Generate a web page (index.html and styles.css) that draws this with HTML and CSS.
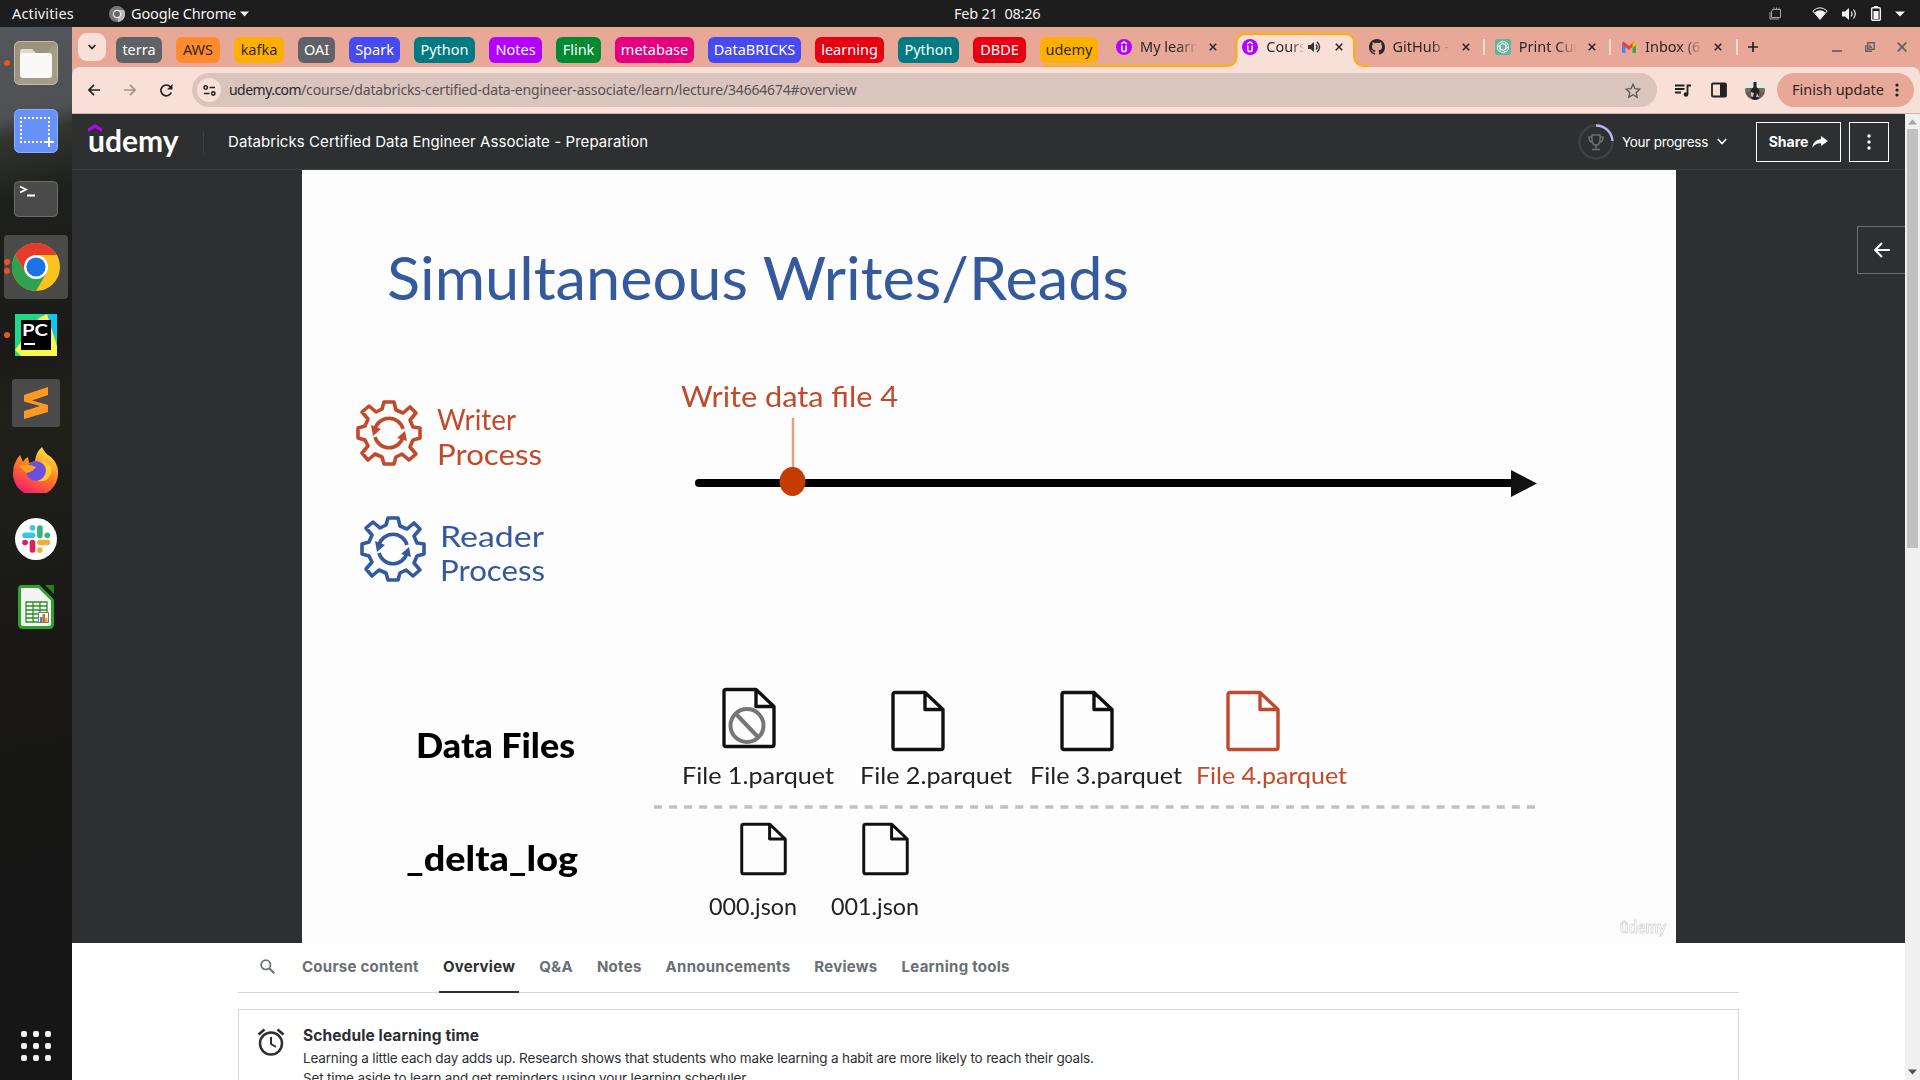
FILE: index.html
```html
<!DOCTYPE html>
<html lang="en">
<head>
<meta charset="utf-8">
<title>Course: Databricks Certified Data Engineer Associate - Preparation | Udemy</title>
<link rel="stylesheet" href="styles.css">
</head>
<body>
<svg class="defs" width="0" height="0" aria-hidden="true">
  <defs>
    <symbol id="x" viewBox="0 0 8 8"><path d="M.8.8l6.4 6.4M7.2.8L.8 7.2" stroke="currentColor" stroke-width="1.6" fill="none"/></symbol>
    <symbol id="udemy-fav" viewBox="0 0 16 16"><circle cx="8" cy="8" r="8" fill="#b400ff"/><path d="M5 5l3-2 3 2M5.800 6.500v4.200q0 1.800 2.200 1.800t2.200-1.800V6.500" fill="none" stroke="#fff" stroke-width="1.500"/></symbol>
    <symbol id="doc" viewBox="0 0 54 61"><path d="M4 2H34L52 19V57Q52 59 50 59H4Q2 59 2 57V4Q2 2 4 2ZM34 2V19H52" fill="none" stroke="currentColor" stroke-width="3.400" stroke-linejoin="round"/></symbol>
    <symbol id="gear" viewBox="-35 -35 70 70">
      <g fill="none" stroke="currentColor" stroke-width="3.600" stroke-linejoin="round">
        <path d="M-5-31H5L7-23 14-20 21-26 27-20 21-13 24-6 31-5V5L24 7 21 14 27 21 20 27 13 21 7 24 5 31H-5L-7 24-14 21-21 27-27 20-21 13-24 7-31 5V-5L-24-7-21-14-27-21-20-27-13-21-7-24Z"/>
        <path d="M-14-4A14.500 14.500 0 0 1 14-4M14 4A14.500 14.500 0 0 1-14 4"/>
      </g>
      <path d="M-18-8L-8-4-16 3ZM18 8L8 5 16-2Z" fill="currentColor"/>
    </symbol>
  </defs>
</svg>
<div class="desktop">
  <header class="topbar">
    <span class="activities">Activities</span>
    <svg class="app-icon" width="16" height="16" viewBox="0 0 16 16"><circle cx="8" cy="8" r="8" fill="#777"/><path d="M8 4h7a8 8 0 0 1-6 12z" fill="#bbb"/><circle cx="8" cy="8" r="3.600" fill="#666" stroke="#eee" stroke-width="1.300"/></svg>
    <span class="app-name">Google Chrome</span>
    <svg width="9" height="6" viewBox="0 0 9 6"><path d="M0 .5h9L4.500 5.500z" fill="#f2f2f2"/></svg>
    <span class="clock">Feb 21&nbsp; 08:26</span>
    <div class="tray">
      <svg width="12" height="13" viewBox="0 0 12 13" fill="none" stroke="#aaa49c"><path d="M3.500 2.500h8v8h-9v-6zM1 5v7h9M5 2V.5M7.500 2V.5M10 2V.5"/></svg>
      <svg class="wifi" width="16" height="13" viewBox="0 0 16 13"><path d="M.8 4Q8-2.500 15.200 4L8 12.500z" fill="none" stroke="#f2f2f2"/><path d="M2.500 5.500Q8 1 13.500 5.500L8 12.500z" fill="#f2f2f2"/></svg>
      <svg width="15" height="12" viewBox="0 0 15 12"><path d="M0 3.500h3L7 0v12L3 8.500H0z" fill="#f2f2f2"/><path d="M9 3.500q2 2.500 0 5M11.500 1.500q3.500 4.500 0 9" fill="none" stroke="#f2f2f2" stroke-width="1.200"/></svg>
      <svg width="10" height="15" viewBox="0 0 10 15"><path d="M3 0h4v2H3z" fill="#f2f2f2"/><rect x=".7" y="1.700" width="8.600" height="12.600" rx="1" fill="none" stroke="#f2f2f2" stroke-width="1.400"/><path d="M2.500 5h5v8h-5z" fill="#f2f2f2"/></svg>
      <svg width="10" height="6" viewBox="0 0 10 6"><path d="M0 .5h10L5 5.500z" fill="#f2f2f2"/></svg>
    </div>
  </header>

  <div class="workspace">
    <nav class="dock">
      <div class="app one"><svg width="44" height="44" viewBox="0 0 44 44"><rect x=".5" y=".5" width="43" height="43" rx="5" fill="#9c937e" stroke="#c6bda9"/><path d="M1 43L43 1v37q0 5-5 5z" fill="#aaa18c" opacity=".6"/><path d="M6 10q0-2 2-2h10l4 4v6H6z" fill="#dedad0"/><rect x="6" y="12" width="32" height="25" rx="3" fill="#faf9f7"/></svg></div>
      <div class="app"><svg width="44" height="44" viewBox="0 0 44 44"><rect x=".5" y=".5" width="43" height="43" rx="5" fill="#6790f8" stroke="#8db0ff"/><path d="M6 9h30M6 33h26M7 8v26M35 8v20" stroke="#fff" stroke-width="2" stroke-dasharray="2 2" fill="none"/><path d="M35 28v10M30 33h10" stroke="#fff" stroke-width="2"/></svg></div>
      <div class="app"><svg width="44" height="36" viewBox="0 0 44 36"><rect x=".5" y=".5" width="43" height="35" rx="4" fill="#4b4b4b" stroke="#6b6b6b"/><path d="M6 5.500l6 3-6 3M13 14.500h8" fill="none" stroke="#fff" stroke-width="1.800"/></svg></div>
      <div class="app two active"><svg width="48" height="48" viewBox="-24 -24 48 48"><circle r="24" fill="#fcc31e"/><path d="M-20.800-12A24 24 0 0 1 20.800-12H0L-10.400 6Z" fill="#e33b2e"/><path d="M-20.800-12A24 24 0 0 0 0 24L10.400 6 0 12-10.400 6Z" fill="#30a14e"/><circle r="12" fill="#fff"/><circle r="9.600" fill="#1a73e8"/></svg></div>
      <div class="app one"><svg width="42" height="42" viewBox="0 0 42 42"><path d="M0 0h42v42H0z" fill="#21d789"/><path d="M25 0h17v24z" fill="#12c5ea"/><path d="M24 4l8-4 10 32v10H6l-6-6z" fill="#fcf84a"/><path d="M6 6h30v30H6z" fill="#000"/><text x="7" y="22" class="pc" textLength="26" lengthAdjust="spacingAndGlyphs">PC</text><path d="M9 30h11" stroke="#fff" stroke-width="2"/></svg></div>
      <div class="app"><svg width="48" height="48" viewBox="0 0 48 48"><rect width="48" height="48" rx="3" fill="#4a4a4a"/><path d="M12 16L36 8v8l-16 5.500L36 26v7L12 40v-8l16-5-16-4.500z" fill="#ff9820"/></svg></div>
      <div class="app firefox"><svg width="46" height="46" viewBox="0 0 46 46"><defs><linearGradient id="ff" x1=".8" y1="0" x2=".3" y2="1"><stop offset="0" stop-color="#fff044"/><stop offset=".5" stop-color="#ff7b22"/><stop offset="1" stop-color="#f4176e"/></linearGradient></defs><path d="M29 0q3 7 9 10 8 8 7 17A22.500 22.500 0 0 1 0 26Q0 16 7 8l3 7q2-4 5-5l1 6 6-2Q23 5 29 0z" fill="url(#ff)"/><circle cx="23" cy="24" r="10" fill="#6b4fe0"/><path d="M6 19q9-3 17 1-3 5-10 6Q9 21 6 19z" fill="#ffa01f"/><path d="M25 14q9 2 8 10-1 8-9 10 10 2 14-7 2-9-6-12z" fill="#ffcb2d"/></svg></div>
      <div class="app"><svg width="42" height="42" viewBox="0 0 42 42"><circle cx="21" cy="21" r="21" fill="#fff"/><g stroke-width="5.600" stroke-linecap="round"><path d="M10 17.200h7.500" stroke="#36c5f0"/><path d="M17.500 9.900v.1" stroke="#36c5f0"/><path d="M24.900 10v7.500" stroke="#2eb67d"/><path d="M32.200 17.200h.1" stroke="#2eb67d"/><path d="M24.900 24.500h7.500" stroke="#ecb22e"/><path d="M24.900 32v.1" stroke="#ecb22e"/><path d="M17.500 24.500v7.500" stroke="#e01e5a"/><path d="M10 24.500h.1" stroke="#e01e5a"/></g></svg></div>
      <div class="app"><svg width="36" height="44" viewBox="0 0 36 44"><path d="M4 1.500h17L34.500 15v24q0 3.500-3.500 3.500H5q-3.500 0-3.500-3.500V4q0-2.500 2.500-2.500z" fill="#f4f4f2" stroke="#2fa32a" stroke-width="3"/><path d="M27 0h9v9z" fill="#28801c"/><path d="M8 17h21v20H8zM8 21h21M8 25h21M8 29h21M8 33h21M15 17v20M22 17v20" fill="#fff" stroke="#2a8f20" stroke-width="1.300"/><path d="M20.500 27.500h10v10h-10z" fill="#fff" stroke="#777"/><path d="M22 32h2.500v5H22z" fill="#2a8bd8"/><path d="M24.500 29H27v8h-2.500z" fill="#e0662a"/><path d="M27 33h2.500v4H27z" fill="#e8a923"/></svg></div>
      <svg class="all-apps" width="30" height="30" viewBox="0 0 30 30" fill="#f2f2f2"><rect width="6" height="6" rx="2"/><rect x="12" width="6" height="6" rx="2"/><rect x="24" width="6" height="6" rx="2"/><rect y="12" width="6" height="6" rx="2"/><rect x="12" y="12" width="6" height="6" rx="2"/><rect x="24" y="12" width="6" height="6" rx="2"/><rect y="24" width="6" height="6" rx="2"/><rect x="12" y="24" width="6" height="6" rx="2"/><rect x="24" y="24" width="6" height="6" rx="2"/></svg>
    </nav>

    <main class="browser">
      <div class="tabstrip">
        <svg class="tab-outline" width="328" height="40" viewBox="0 0 328 40"><path d="M0 39H185Q194 39 194.500 30V16Q195 7 204 7H303Q312 7 312 16V30Q313 39 322 39H327V40H0Z" fill="#f8e0d8"/><path d="M0 39H185Q194 39 194.500 30V16Q195 7 204 7H303Q312 7 312 16V30Q313 39 322 39H327" fill="none" stroke="#ffb000" stroke-width="2"/></svg>
        <button class="tab-search"><svg width="8" height="6" viewBox="0 0 8 6"><path d="M.7 1l3.300 3.500L7.300 1" fill="none" stroke="#222" stroke-width="1.800"/></svg></button>
        <div class="groups">
          <span class="chip grey w46">terra</span>
          <span class="chip orange w44">AWS</span>
          <span class="chip yellow w50">kafka</span>
          <span class="chip grey w37">OAI</span>
          <span class="chip blue w51">Spark</span>
          <span class="chip teal w61">Python</span>
          <span class="chip purple w53">Notes</span>
          <span class="chip green w45">Flink</span>
          <span class="chip pink w79">metabase</span>
          <span class="chip blue w93">DataBRICKS</span>
          <span class="chip red w69">learning</span>
          <span class="chip teal w61">Python</span>
          <span class="chip red w53">DBDE</span>
          <span class="chip yellow w58">udemy</span>
        </div>
        <div class="tabs">
          <div class="tab"><svg width="16" height="16"><use href="#udemy-fav"/></svg><span class="label">My learn</span><svg width="8" height="8"><use href="#x"/></svg></div>
          <div class="tab current"><svg width="16" height="16"><use href="#udemy-fav"/></svg><span class="label short">Cours</span><svg width="13" height="12" viewBox="0 0 13 12"><path d="M0 4h2.500L6 1v10L2.500 8H0z" fill="#333"/><path d="M8 3.500q2 2.500 0 5M9 .7q5 5.300 0 10.600" fill="none" stroke="#333" stroke-width="1.400"/></svg><svg width="8" height="8"><use href="#x"/></svg></div>
          <div class="tab sep"><svg width="16" height="16" viewBox="0 0 16 16"><path d="M8 0C3.580 0 0 3.580 0 8c0 3.540 2.290 6.530 5.470 7.590.4.070.55-.17.55-.38v-1.490c-2.010.37-2.530-.49-2.690-.94-.09-.23-.48-.94-.82-1.130-.28-.15-.68-.52-.01-.53.63-.01 1.080.58 1.230.82.720 1.210 1.870.87 2.330.66.070-.52.280-.87.510-1.070-1.780-.2-3.640-.89-3.640-3.950 0-.87.310-1.590.82-2.150-.08-.2-.36-1.020.08-2.120 0 0 .67-.21 2.200.82A7.600 7.600 0 0 1 8 3.860c.68 0 1.360.09 2 .27 1.530-1.040 2.200-.82 2.200-.82.440 1.100.160 1.920.080 2.120.51.560.82 1.270.82 2.150 0 3.070-1.870 3.750-3.650 3.950.29.250.54.730.54 1.480v2.200c0 .21.150.46.550.38A8 8 0 0 0 16 8c0-4.420-3.580-8-8-8z" fill="#24292f"/></svg><span class="label">GitHub -</span><svg width="8" height="8"><use href="#x"/></svg></div>
          <div class="tab sep"><svg width="16" height="16" viewBox="0 0 16 16"><rect width="16" height="16" rx="2" fill="#66b3a0"/><g fill="none" stroke="#fff" stroke-width=".7" transform="translate(8 8)"><path id="petal" d="M-3-4.500Q-1-6.500 1.500-5.500 3.500-4.500 3-2V1.800L0 3.500"/><use href="#petal" transform="rotate(60)"/><use href="#petal" transform="rotate(120)"/><use href="#petal" transform="rotate(180)"/><use href="#petal" transform="rotate(240)"/><use href="#petal" transform="rotate(300)"/></g></svg><span class="label">Print Cur</span><svg width="8" height="8"><use href="#x"/></svg></div>
          <div class="tab sep"><svg width="16" height="16" viewBox="0 0 16 16"><path d="M1 4h3.500v10H2q-1 0-1-1z" fill="#4285f4"/><path d="M11.500 4H15v9q0 1-1 1h-2.500z" fill="#34a853"/><path d="M1 4l1.500-1.500L8 7l5-4.500 2 2-7 6.500-7-6z" fill="#ea4335"/><path d="M11.500 4.500L14 2.500q1 .5 1 1.500v2l-3.500 3z" fill="#fbbc04"/></svg><span class="label">Inbox (6</span><svg width="8" height="8"><use href="#x"/></svg></div>
        </div>
        <svg class="plus" width="10" height="10" viewBox="0 0 10 10"><path d="M5 0v10M0 5h10" stroke="#222" stroke-width="1.700"/></svg>
        <div class="window-buttons">
          <svg width="10" height="10" viewBox="0 0 10 10"><path d="M0 9h10" stroke="#6c5f60" stroke-width="1.800"/></svg>
          <svg width="10" height="10" viewBox="0 0 10 10"><path d="M2.800.8h6.400v6.400H2.800zM5 2.800v2.400h2M.8 3v6.200H7" fill="none" stroke="#6c5f60" stroke-width="1.500"/></svg>
          <svg width="10" height="10" viewBox="0 0 10 10"><path d="M.7.7l8.600 8.600M9.300.7L.7 9.300" stroke="#6c5f60" stroke-width="1.800"/></svg>
        </div>
      </div>

      <div class="toolbar">
        <div class="nav">
          <svg width="12" height="12" viewBox="0 0 12 12"><path d="M12 6H1M6 .8L.9 6 6 11.200" fill="none" stroke="#222" stroke-width="1.700"/></svg>
          <svg width="12" height="12" viewBox="0 0 12 12"><path d="M0 6h11M6 .8L11.100 6 6 11.200" fill="none" stroke="#a3918c" stroke-width="1.700"/></svg>
          <svg width="13" height="13" viewBox="0 0 13 13"><path d="M11.300 8.500A5.400 5.400 0 1 1 10.500 3" fill="none" stroke="#222" stroke-width="1.700"/><path d="M12.500 0v5.500H7z" fill="#222"/></svg>
        </div>
        <div class="omnibox">
          <span class="site"><svg width="13" height="11" viewBox="0 0 13 11" fill="none" stroke="#222" stroke-width="1.500"><circle cx="2.700" cy="2.500" r="1.700"/><path d="M6.500 2.500H12M1 8.500h5.500"/><circle cx="10.300" cy="8.500" r="1.700"/></svg></span>
          <span class="url"><span class="host">udemy.com</span><span class="path">/course/databricks-certified-data-engineer-associate/learn/lecture/34664674#overview</span></span>
          <svg class="star" width="16" height="15" viewBox="0 0 16 15"><path d="M8 1.200l2 4.500 4.900.5-3.700 3.300 1.100 4.800L8 11.800l-4.300 2.500 1.100-4.800L1.100 6.200 6 5.700z" fill="none" stroke="#5c5355" stroke-width="1.300"/></svg>
        </div>
        <svg class="media" width="16" height="13" viewBox="0 0 16 13"><path d="M0 1.500h9.500M0 5h9.500M0 8.500h6M12.500 10V1.500H16" fill="none" stroke="#222" stroke-width="1.800"/><circle cx="11" cy="10.500" r="2.300" fill="#222"/></svg>
        <svg class="side" width="16" height="16" viewBox="0 0 16 16"><rect x="1" y="1.500" width="14" height="13" rx="1" fill="none" stroke="#222" stroke-width="1.800"/><path d="M9 1h6v14H9z" fill="#222"/></svg>
        <svg class="avatar" width="20" height="20" viewBox="0 0 20 20"><defs><clipPath id="av"><circle cx="10" cy="10" r="10"/></clipPath></defs><g clip-path="url(#av)"><path d="M0 0h20v20H0z" fill="#e9e7e6"/><path d="M0 8h20v4H0z" fill="#65775a"/><path d="M0 12h20v8H0z" fill="#6e5a50"/><path d="M8.500 2h3v5l3 3-1 10H7L5.500 10l3-3z" fill="#252126"/><path d="M6 12l3 1-1 4-2-1zM12 13l2 4h-3z" fill="#c9c4c0"/></g></svg>
        <div class="update"><span class="update-text">Finish update</span><svg width="4" height="14" viewBox="0 0 4 14" fill="#222"><circle cx="2" cy="2" r="1.600"/><circle cx="2" cy="7" r="1.600"/><circle cx="2" cy="12" r="1.600"/></svg></div>
      </div>

      <div class="viewport">
        <div class="page">
          <header class="course-header">
            <div class="logo"><svg class="hat" width="14" height="8" viewBox="0 0 14 8"><path d="M0 4.500L7 0l7 4.500V8L7 4 0 8z" fill="#b400ff"/></svg>udemy</div>
            <h1>Databricks Certified Data Engineer Associate - Preparation</h1>
            <svg class="ring" width="36" height="36" viewBox="-18 -18 36 36" fill="none"><circle r="16.500" stroke="#3e4143" stroke-width="2.400"/><path d="M0-16.500A16.500 16.500 0 0 1 16.500-1" stroke="#c0b0f8" stroke-width="2.400"/><path d="M-4-7H4V-2Q4 3 0 3T-4-2ZM-4-5H-7Q-7 0-3.500 0M4-5H7Q7 0 3.500 0M0 3V7M-4 7.500H4" stroke="#6a6f73" stroke-width="1.500"/></svg>
            <span class="progress">Your progress</span>
            <svg class="chev" width="10" height="7" viewBox="0 0 10 7"><path d="M.8 1L5 5.500 9.200 1" fill="none" stroke="#fff" stroke-width="1.700"/></svg>
            <button class="share">Share<svg width="16" height="12" viewBox="0 0 16 12"><path d="M9 0l7 5-7 5V7.200Q3 7 0 12 1 4 9 3z" fill="#fff"/></svg></button>
            <button class="more"><svg width="4" height="16" viewBox="0 0 4 16" fill="#fff"><circle cx="2" cy="2" r="1.700"/><circle cx="2" cy="8" r="1.700"/><circle cx="2" cy="14" r="1.700"/></svg></button>
          </header>
          <section class="stage">
            <svg class="slide" width="1374" height="773" viewBox="302 170 1374 773">
              <rect x="302" y="170" width="1374" height="773" fill="#fdfdfd"/>
              <g class="ink">
                <text x="387" y="300" class="blue" font-size="60" textLength="742" lengthAdjust="spacingAndGlyphs">Simultaneous Writes/Reads</text>
                <g class="rust">
                  <text x="681" y="407" font-size="29" textLength="217" lengthAdjust="spacingAndGlyphs">Write data file 4</text>
                  <use href="#gear" x="354" y="398" width="70" height="70"/>
                  <text x="437" y="430" font-size="29" textLength="79" lengthAdjust="spacingAndGlyphs">Writer</text>
                  <text x="437" y="465" font-size="29" textLength="105" lengthAdjust="spacingAndGlyphs">Process</text>
                </g>
                <g class="blue">
                  <use href="#gear" x="358" y="514" width="70" height="70"/>
                  <text x="440" y="547" font-size="29" textLength="104" lengthAdjust="spacingAndGlyphs">Reader</text>
                  <text x="440" y="581" font-size="29" textLength="105" lengthAdjust="spacingAndGlyphs">Process</text>
                </g>
                <path d="M793 418V470" stroke="#e2a07f" stroke-width="2.500"/>
                <path d="M699 483H1514" stroke="#000" stroke-width="8" stroke-linecap="round"/>
                <path d="M1511 470L1537 483.500 1511 497Z"/>
                <ellipse cx="792.500" cy="481.500" rx="13" ry="14.500" fill="#c43c00"/>
                <text x="416" y="758" class="heavy" font-size="34" textLength="159" lengthAdjust="spacingAndGlyphs">Data Files</text>
                <text x="406" y="871" class="heavy" font-size="34" textLength="172" lengthAdjust="spacingAndGlyphs">_delta_log</text>
                <use href="#doc" x="722" y="687" width="54" height="62"/>
                <g fill="none" stroke="#77757a" stroke-width="4"><circle cx="747" cy="725.500" r="16.500"/><path d="M736 714L759 738"/></g>
                <use href="#doc" x="891" y="690" width="54" height="62"/>
                <use href="#doc" x="1060" y="690" width="54" height="62"/>
                <use href="#doc" class="rust" x="1226" y="690" width="54" height="62"/>
                <g font-size="23" class="soft">
                  <text x="682" y="784" textLength="152" lengthAdjust="spacingAndGlyphs">File 1.parquet</text>
                  <text x="860" y="784" textLength="152" lengthAdjust="spacingAndGlyphs">File 2.parquet</text>
                  <text x="1030" y="784" textLength="152" lengthAdjust="spacingAndGlyphs">File 3.parquet</text>
                  <text x="1196" y="784" textLength="151" lengthAdjust="spacingAndGlyphs" class="rust">File 4.parquet</text>
                  <text x="709" y="915" textLength="88" lengthAdjust="spacingAndGlyphs">000.json</text>
                  <text x="831" y="915" textLength="88" lengthAdjust="spacingAndGlyphs">001.json</text>
                </g>
                <path d="M654 807H1535" stroke="#c3bfc3" stroke-width="3.500" stroke-dasharray="8 7.050"/>
                <use href="#doc" x="740" y="822" width="47" height="54"/>
                <use href="#doc" x="862" y="822" width="47" height="54"/>
                <text x="1620" y="933" class="mark" font-size="17" textLength="46" lengthAdjust="spacingAndGlyphs">ûdemy</text>
              </g>
            </svg>
            <button class="drawer"><svg width="16" height="16" viewBox="0 0 16 16"><path d="M16 8H1.500M8 1L1.200 8 8 15" fill="none" stroke="#fff" stroke-width="2"/></svg></button>
          </section>
          <section class="below">
            <nav class="course-tabs">
              <svg width="15" height="15" viewBox="0 0 15 15"><circle cx="5.800" cy="5.800" r="4.700" fill="none" stroke="#6a6f73" stroke-width="1.700"/><path d="M9 9l5.300 5.300" stroke="#6a6f73" stroke-width="2"/></svg>
              <a>Course content</a><a class="on">Overview</a><a>Q&amp;A</a><a>Notes</a><a>Announcements</a><a>Reviews</a><a>Learning tools</a>
            </nav>
            <article class="schedule">
              <svg width="28" height="30" viewBox="0 -2 28 30" fill="none" stroke="#2d2f31"><circle cx="14" cy="15.500" r="11" stroke-width="2.500"/><path d="M14 9v7l5 3" stroke-width="2"/><path d="M1.500 6.500l6-5M26.500 6.500l-6-5" stroke-width="2.600"/></svg>
              <div>
                <h2>Schedule learning time</h2>
                <p>Learning a little each day adds up. Research shows that students who make learning a habit are more likely to reach their goals.</p>
                <p>Set time aside to learn and get reminders using your learning scheduler.</p>
              </div>
            </article>
          </section>
        </div>
        <div class="scrollbar"><svg width="9" height="6" viewBox="0 0 9 6"><path d="M0 5.500h9L4.500.5z" fill="#a3a3a3"/></svg><i class="thumb"></i><svg width="9" height="6" viewBox="0 0 9 6"><path d="M0 .5h9L4.500 5.500z" fill="#505050"/></svg></div>
      </div>
    </main>
  </div>
</div>
</body>
</html>
```
FILE: styles.css
```css
* { box-sizing: border-box; }
html, body { margin: 0; height: 100%; overflow: hidden; }
body { font-family: "Noto Sans", sans-serif; }
svg { display: block; flex: none; }
button { background: none; border: 0; padding: 0; font: inherit; color: inherit; }
.defs { position: absolute; }
.desktop { display: flex; flex-direction: column; width: 1920px; height: 1080px; overflow: hidden; }

/* system bar */
.topbar { height: 27px; flex: none; background: #1d1d1d; color: #f2f2f2; display: flex; align-items: center; padding-left: 12px; font-size: 14.5px; line-height: 20px; white-space: nowrap; }
.topbar span { padding-bottom: 2px; }
.activities { width: 97px; letter-spacing: .15px; }
.app-icon { margin-right: 6px; }
.app-name { width: 109px; letter-spacing: -.15px; }
.clock { margin-left: 705px; letter-spacing: -.25px; }
.tray { display: flex; align-items: center; margin-left: auto; padding-right: 15px; gap: 14px; }
.wifi { margin-left: 17px; }

/* launcher */
.workspace { display: flex; flex: 1; min-height: 0; }
.dock { width: 72px; flex: none; padding-top: 4px; display: flex; flex-direction: column; align-items: center; gap: 4px; background: linear-gradient(168deg, #53565b 0, #505154 90px, #33352f 110px, #1e201d 170px, #1b1a19 320px, #20211a 380px, #191817 600px, #161616 100%); }
.app { position: relative; width: 64px; height: 64px; display: grid; place-items: center; border-radius: 4px; }
.app.active { background: rgba(255,255,255,.2); }
.app.one::before, .app.two::before { content: ""; position: absolute; left: 0; top: 29px; width: 6px; height: 6px; border-radius: 50%; background: #e95420; }
.app.two::before { top: 24px; box-shadow: 0 9px #e95420; }
.firefox { padding-bottom: 3px; }
.all-apps { margin-top: auto; margin-bottom: 19px; }
.pc { font: 700 17px Lato, sans-serif; fill: #fff; }

/* tab strip */
.browser { flex: 1; min-width: 0; display: flex; flex-direction: column; background: #e7a897; }
.tabstrip { position: relative; height: 40px; flex: none; display: flex; align-items: flex-start; padding: 6px 0 0 6px; color: #2c2526; font-size: 14.5px; line-height: 20px; white-space: nowrap; }
.tab-outline { position: absolute; left: 970px; top: 0; }
.tab-search { width: 28px; height: 28px; border-radius: 9px; background: #f8e0d8; display: grid; place-items: center; }
.groups { display: flex; gap: 14px; margin: 4px 0 0 10px; }
.chip { height: 26px; padding-bottom: 2px; border-radius: 6px; display: grid; place-items: center; color: #fff; }
.grey { background: #5f6368; } .orange { background: #ff8b2c; color: #33261e; } .yellow { background: #feb000; color: #33281e; }
.chip.blue { background: #464af0; } .teal { background: #007b83; } .purple { background: #b400ff; }
.green { background: #008a32; } .pink { background: #e4007f; } .chip.red { background: #e60012; }
.w37 { width: 37px; } .w44 { width: 44px; } .w45 { width: 45px; } .w46 { width: 46px; } .w50 { width: 50px; } .w51 { width: 51px; }
.w53 { width: 53px; } .w58 { width: 58px; } .w61 { width: 61px; } .w69 { width: 69px; } .w79 { width: 79px; } .w93 { width: 93px; }
.tabs { display: flex; margin-left: 10px; }
.tab { position: relative; width: 126.25px; height: 28px; padding-left: 8px; display: flex; align-items: center; }
.label { width: 57px; margin: 0 12px 0 8px; padding-bottom: 2px; overflow: hidden; -webkit-mask-image: linear-gradient(90deg, #000 65%, transparent 102%); mask-image: linear-gradient(90deg, #000 65%, transparent 102%); }
.label.short { width: 38px; margin-right: 4px; }
.current svg:last-child { margin-left: 14px; }
.sep::after { content: ""; position: absolute; left: 122.500px; top: 6px; width: 2px; height: 16px; background: #f8d9cf; }
.plus { margin: 9px 0 0 9px; }
.window-buttons { display: flex; gap: 22.500px; margin: 9px 13px 0 auto; }

/* toolbar */
.toolbar { height: 47px; flex: none; background: #f8e0d8; border-radius: 8px 8px 0 0; border-bottom: 1px solid #cbb7b0; display: flex; align-items: center; padding: 0 6px 0 16px; font-size: 14.5px; line-height: 20px; color: #2c2526; white-space: nowrap; }
.nav { display: flex; gap: 24px; width: 104px; }
.omnibox { width: 1465px; height: 34px; border-radius: 17px; background: #d9c5bd; display: flex; align-items: center; padding: 0 16px 0 5px; }
.site { width: 24px; height: 24px; border-radius: 50%; background: #f8e0d8; display: grid; place-items: center; margin-right: 8px; }
.url { font-size: 14px; }
.host { letter-spacing: -.53px; }
.path { color: #5b5051; letter-spacing: -.18px; }
.star { margin-left: auto; }
.media { margin-left: 18px; } .side { margin-left: 20px; } .avatar { margin-left: 18px; }
.update { margin-left: 12px; flex: 1; height: 34px; border-radius: 17px; background: #e7a897; display: flex; align-items: center; justify-content: space-between; padding: 0 15px; }
.update-text { padding-bottom: 2px; }

/* course page */
.viewport { flex: 1; min-height: 0; display: flex; background: #fff; }
.page { flex: 1; min-width: 0; overflow: hidden; font-family: Inter, sans-serif; color: #2d2f31; }
.course-header { height: 56px; background: #2d2f31; border-bottom: 1px solid #3e4143; color: #fff; display: flex; align-items: center; padding: 0 16px; white-space: nowrap; }
.logo { position: relative; width: 116px; height: 22px; border-right: 1px solid #3e4143; font: 700 30px/18px Lato, sans-serif; }
.hat { position: absolute; left: 0; top: -7px; }
h1 { margin: 0 0 0 24px; font-size: 15px; font-weight: 400; letter-spacing: .07px; }
.ring { margin-left: auto; margin-right: 8px; }
.progress { font-size: 13.5px; letter-spacing: -.27px; }
.chev { margin: 0 29px 0 9px; }
.share { width: 85px; height: 40px; border: 1px solid #fff; display: flex; align-items: center; justify-content: center; gap: 4px; font-size: 14px; font-weight: 700; }
.more { width: 40px; height: 40px; border: 1px solid #fff; margin-left: 8px; display: grid; place-items: center; }
.stage { position: relative; height: 773px; background: #2d2f31; padding-left: 230px; }
.drawer { position: absolute; right: 0; top: 56px; width: 48px; height: 48px; border: 1px solid #6a6f73; border-right: 0; background: #2d2f31; display: grid; place-items: center; }
.slide { font-family: Lato, sans-serif; }
.ink { filter: blur(.7px); color: #111; fill: #111; }
.ink .blue { color: #34599c; fill: #34599c; }
.ink .rust { color: #c2492a; fill: #c2492a; }
.ink .heavy { font-weight: 900; fill: #000; }
.soft { fill: #222; }
.mark { fill: #fff; stroke: #d5d2d6; stroke-width: .8; font-weight: 700; }

.below { width: 1501px; margin-left: 166px; }
.course-tabs { height: 50px; border-bottom: 1px solid #d1d7dc; display: flex; align-items: center; padding: 0 0 2px 22px; font-size: 15px; line-height: 20px; letter-spacing: .27px; font-weight: 700; color: #6a6f73; white-space: nowrap; }
.course-tabs svg { margin-right: 27px; }
.course-tabs a { margin-right: 24px; }
.course-tabs .on { position: relative; color: #2d2f31; }
.on::after { content: ""; position: absolute; left: -4px; right: -4px; bottom: -16px; height: 2px; background: #2d2f31; }
.schedule { margin-top: 16px; border: 1px solid #d1d7dc; height: 160px; display: flex; padding: 16px 19px 16px 18px; gap: 18px; white-space: nowrap; }
h2 { margin: 0 0 2px; font-size: 15.500px; line-height: 20px; font-weight: 700; letter-spacing: .1px; }
.schedule p { margin: 0; font-size: 13.500px; line-height: 20px; letter-spacing: -.17px; }

/* scrollbar */
.scrollbar { width: 15px; background: #f0f0f0; display: flex; flex-direction: column; align-items: center; padding: 5px 0 5px; }
.thumb { width: 11px; height: 419px; margin: 4px 0 auto; background: #c1c1c1; }
```
